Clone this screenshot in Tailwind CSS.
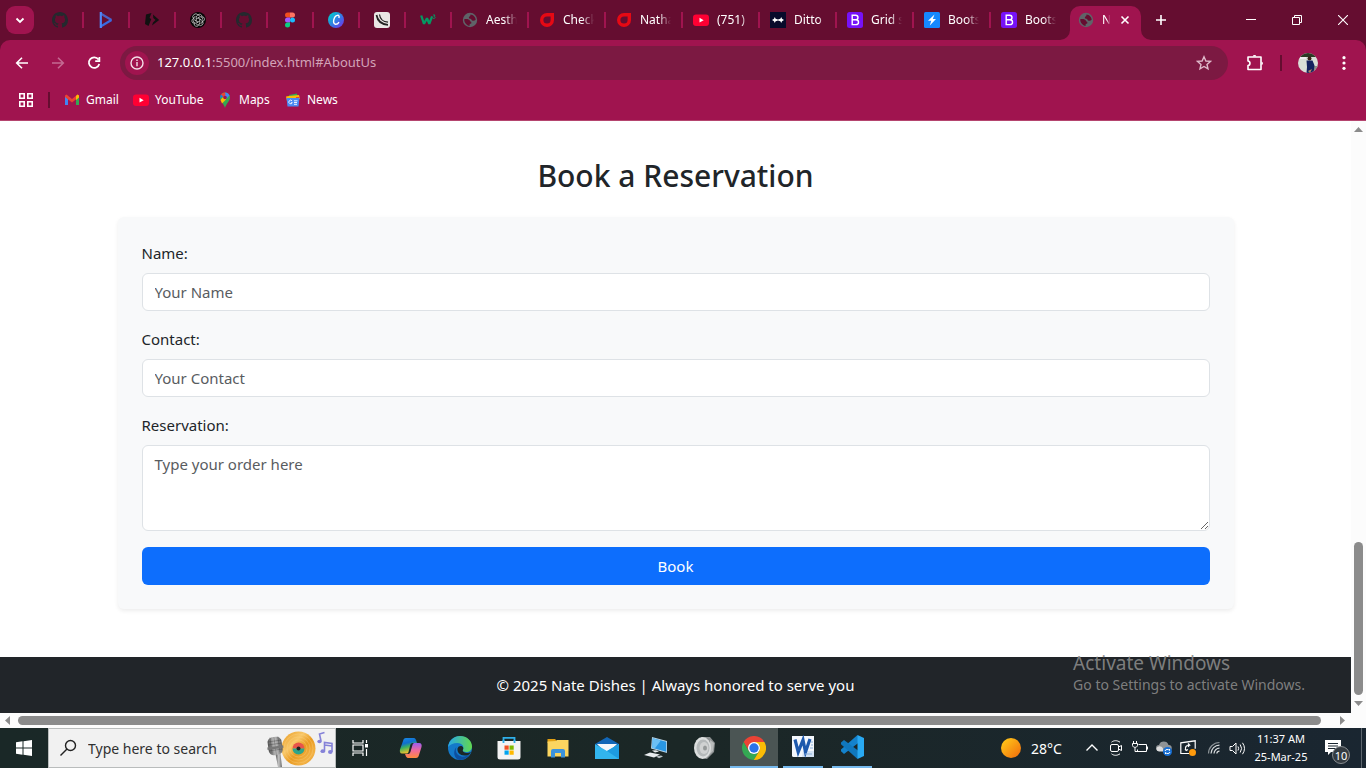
<!DOCTYPE html>
<html lang="en">
<head>
<meta charset="utf-8">
<title>Nate Dishes</title>
<script src="https://cdn.jsdelivr.net/npm/@tailwindcss/browser@4"></script>
</head>
<body class="flex h-screen flex-col overflow-hidden bg-white font-['Noto_Sans','Open_Sans',sans-serif] text-[15px] text-[#212529]">

<svg class="hidden" aria-hidden="true">
  <defs>
    <symbol id="github" viewBox="0 0 16 16"><path fill="#24292e" d="M8 0C3.58 0 0 3.58 0 8c0 3.54 2.29 6.53 5.47 7.59.4.07.55-.17.55-.38 0-.19-.01-.82-.01-1.49-2.01.37-2.53-.49-2.69-.94-.09-.23-.48-.94-.82-1.13-.28-.15-.68-.52-.01-.53.63-.01 1.08.58 1.23.82.72 1.21 1.87.87 2.33.66.07-.52.28-.87.51-1.07-1.78-.2-3.64-.89-3.64-3.95 0-.87.31-1.59.82-2.15-.08-.2-.36-1.02.08-2.12 0 0 .67-.21 2.2.82.64-.18 1.32-.27 2-.27s1.36.09 2 .27c1.53-1.04 2.2-.82 2.2-.82.44 1.1.16 1.92.08 2.12.51.56.82 1.27.82 2.15 0 3.07-1.87 3.75-3.65 3.95.29.25.54.73.54 1.48 0 1.07-.01 1.93-.01 2.2 0 .21.15.46.55.38A8 8 0 0 0 16 8c0-4.42-3.58-8-8-8z"/></symbol>
    <symbol id="globe" viewBox="0 0 16 16"><circle cx="8" cy="8" r="7.200" fill="#5f6368"/><path fill="#650d30" d="M2.200 7.200c2.200-.6 4.300-.3 5.300.9.800 1 .4 1.600 1.800 1.800v1.600l-1.600.6v1.700c-3-.2-5.500-3-5.500-6.600zM8.500 2.500c2.800.2 5 2.500 5.200 5.200-.9 1-2.400 1.300-3.600.7-.9-.5-.5-1.300-1.700-1.600-1-.2-1.700-.7-1.500-1.600.2-.8 1-.7 1.300-1.300z"/></symbol>
    <symbol id="drop" viewBox="0 0 16 16"><path fill="#e50914" fill-rule="evenodd" d="M15 1v7a7 7 0 1 1-7-7zM8 4.400a3.600 3.600 0 1 0 3.600 3.600V4.400z"/></symbol>
    <symbol id="youtube" viewBox="0 0 16 16"><rect y="2.500" width="16" height="11.500" rx="3" fill="#ff0033"/><path fill="#fff" d="M6.500 5.800v4.800l4.200-2.400z"/></symbol>
    <symbol id="bootstrap" viewBox="0 0 16 16"><rect width="16" height="16" rx="2.500" fill="#7712f8"/><path fill="none" stroke="#fff" stroke-width="1.400" d="M5.200 3.200h3.400c3.200 0 3.200 4.500 0 4.500H5.200zm0 4.500h3.700c3.500 0 3.500 4.900 0 4.900H5.200z"/></symbol>
  </defs>
</svg>

<!-- Tab strip -->
<header class="shrink-0 bg-[#650d30] text-white">
  <div class="flex h-10 items-end text-[12px]">
    <button aria-label="Search tabs" class="mr-1 mb-[6px] ml-[6px] grid size-7 shrink-0 place-items-center rounded-[9px] bg-[#a0144f]"><svg class="size-3" viewBox="0 0 12 12" fill="none" stroke="#fff" stroke-width="1.800"><path d="M2.500 4.500 6 8l3.500-3.500"/></svg></button>
    <nav aria-label="Tabs" class="flex h-10 min-w-0 items-center">
      <a href="#" aria-label="GitHub" class="flex w-[44px] justify-center"><svg class="size-4"><use href="#github"/></svg></a><span class="h-4 w-[2px] bg-[#a0144f]"></span>
      <a href="#" aria-label="Player" class="flex w-[44px] justify-center"><svg class="size-4" viewBox="0 0 16 16" fill="none" stroke-width="2.200"><path stroke="#4b5fc4" d="M3 1.800 13.500 8"/><path stroke="#3a6ae0" d="M3 14.200 13.500 8"/><path stroke="#4f86f7" d="M2.800 0v16"/></svg></a><span class="h-4 w-[2px] bg-[#a0144f]"></span>
      <a href="#" aria-label="Code" class="flex w-[44px] justify-center"><svg class="size-4" viewBox="0 0 16 16" fill="#111"><path d="M2 2.500 7.500 1 5.500 6l1.800 1L4.500 14 1 12zM9 2.500 15.200 8 8 13.500l1-3L11.500 8 9.300 6z"/></svg></a><span class="h-4 w-[2px] bg-[#a0144f]"></span>
      <a href="#" aria-label="ChatGPT" class="flex w-[44px] justify-center"><svg class="size-4" viewBox="0 0 16 16"><circle cx="8" cy="8" r="8" fill="#050505"/><g fill="none" stroke="#e4e4e4" stroke-width=".7"><path id="petal" d="M6.200 9V5.200a2 2 0 0 1 3.600-1.200"/><use href="#petal" transform="rotate(60 8 8)"/><use href="#petal" transform="rotate(120 8 8)"/><use href="#petal" transform="rotate(180 8 8)"/><use href="#petal" transform="rotate(240 8 8)"/><use href="#petal" transform="rotate(300 8 8)"/><path d="M8 2.900a2.300 2.300 0 0 1 3.900 1.900 2.300 2.300 0 0 1 .5 4.600 2.300 2.300 0 0 1-3.600 3.300 2.300 2.300 0 0 1-4.500-1.500 2.300 2.300 0 0 1-.8-4.500A2.300 2.300 0 0 1 8 2.900z"/></g></svg></a><span class="h-4 w-[2px] bg-[#a0144f]"></span>
      <a href="#" aria-label="GitHub" class="flex w-[44px] justify-center"><svg class="size-4"><use href="#github"/></svg></a><span class="h-4 w-[2px] bg-[#a0144f]"></span>
      <a href="#" aria-label="Figma" class="flex w-[44px] justify-center"><svg class="size-4" viewBox="0 0 16 16"><path fill="#f24e1e" d="M8 .5v5H5.500a2.500 2.500 0 0 1 0-5z"/><path fill="#ff7262" d="M8 .5h2.500a2.500 2.500 0 0 1 0 5H8z"/><path fill="#a259ff" d="M8 5.500v5H5.500a2.500 2.500 0 0 1 0-5z"/><circle cx="10.500" cy="8" r="2.500" fill="#1abcfe"/><path fill="#0acf83" d="M8 10.500V13a2.500 2.500 0 1 1-2.500-2.500z"/></svg></a><span class="h-4 w-[2px] bg-[#a0144f]"></span>
      <a href="#" aria-label="Canva" class="flex w-[44px] justify-center"><svg class="size-4" viewBox="0 0 16 16"><defs><linearGradient id="cv" x2="1" y2="1"><stop offset=".15" stop-color="#05c4cf"/><stop offset=".6" stop-color="#3d6ee8"/><stop offset="1" stop-color="#7d2ae8"/></linearGradient></defs><circle cx="8" cy="8" r="8" fill="url(#cv)"/><path d="M10.800 6c.9-1.500 0-3-1.500-2.600-3.400.7-5.400 8.400-1.800 8.900 1.500.1 2.700-.8 3.500-2.200" fill="none" stroke="#fff" stroke-width="1.400"/></svg></a><span class="h-4 w-[2px] bg-[#a0144f]"></span>
      <a href="#" aria-label="Design" class="flex w-[44px] justify-center"><svg class="size-4" viewBox="0 0 16 16"><rect width="16" height="16" rx="3" fill="#e9e6e4"/><g fill="none" stroke="#222"><path stroke-width="1.700" d="M2.500 3c1 6 4.500 9.300 11.500 9.800"/><path stroke-width="1.200" d="M5.500 2.500c.5 4 3.500 7.300 8.500 7.700"/></g></svg></a><span class="h-4 w-[2px] bg-[#a0144f]"></span>
      <a href="#" aria-label="W3Schools" class="flex w-[44px] justify-center"><svg class="size-4" viewBox="0 0 16 16" fill="none" stroke="#059862"><path stroke-width="2.300" stroke-linejoin="bevel" d="M1.200 3.500 4 11.800l3-5.500 2.300 5.500 2.800-7.500"/><path stroke-width=".9" d="M13 3h2l-1 1.500c2 0 1.500 2.500-1 1.800"/></svg></a><span class="h-4 w-[2px] bg-[#a0144f]"></span>

      <a href="#" class="flex w-[75px] items-center gap-2 pl-[10px]"><svg class="size-4 shrink-0"><use href="#globe"/></svg><span class="w-[31px] overflow-hidden whitespace-nowrap mask-r-from-60%">Aesth</span></a><span class="h-4 w-[2px] bg-[#a0144f]"></span>
      <a href="#" class="flex w-[75px] items-center gap-2 pl-[10px]"><svg class="size-4 shrink-0"><use href="#drop"/></svg><span class="w-[31px] overflow-hidden whitespace-nowrap mask-r-from-60%">Check</span></a><span class="h-4 w-[2px] bg-[#a0144f]"></span>
      <a href="#" class="flex w-[75px] items-center gap-2 pl-[10px]"><svg class="size-4 shrink-0"><use href="#drop"/></svg><span class="w-[31px] overflow-hidden whitespace-nowrap mask-r-from-60%">Natha</span></a><span class="h-4 w-[2px] bg-[#a0144f]"></span>
      <a href="#" class="flex w-[75px] items-center gap-2 pl-[10px]"><svg class="size-4 shrink-0"><use href="#youtube"/></svg><span class="w-[31px] overflow-hidden whitespace-nowrap mask-r-from-80%">(751)</span></a><span class="h-4 w-[2px] bg-[#a0144f]"></span>
      <a href="#" class="flex w-[75px] items-center gap-2 pl-[10px]"><svg class="size-4 shrink-0" viewBox="0 0 16 16"><path fill="#080b2b" d="M0 0h16v16H0z"/><path fill="#fff" d="M2 8l2-1.300L4.800 5l.8 1.700L8 7.600l2.400-.9.800-1.700.8 1.700L14 8l-2 1.300-.8 1.700-.8-1.700L8 8.500l-2.400.8-.8 1.700L4 9.300z"/></svg><span class="w-[31px] overflow-hidden whitespace-nowrap mask-r-from-80%">Ditto</span></a><span class="h-4 w-[2px] bg-[#a0144f]"></span>
      <a href="#" class="flex w-[75px] items-center gap-2 pl-[10px]"><svg class="size-4 shrink-0"><use href="#bootstrap"/></svg><span class="w-[31px] overflow-hidden whitespace-nowrap mask-r-from-60%">Grid s</span></a><span class="h-4 w-[2px] bg-[#a0144f]"></span>
      <a href="#" class="flex w-[75px] items-center gap-2 pl-[10px]"><svg class="size-4 shrink-0" viewBox="0 0 16 16"><rect width="16" height="16" rx="1.500" fill="#1688ff"/><path fill="#fff" d="M10.500 2.500 4 8.800h3.300L5.800 13.500 12 7H8.800z"/></svg><span class="w-[31px] overflow-hidden whitespace-nowrap mask-r-from-60%">Boots</span></a><span class="h-4 w-[2px] bg-[#a0144f]"></span>
      <a href="#" class="flex w-[75px] items-center gap-2 pl-[10px]"><svg class="size-4 shrink-0"><use href="#bootstrap"/></svg><span class="w-[31px] overflow-hidden whitespace-nowrap mask-r-from-60%">Boots</span></a>
    </nav>
    <div class="ml-[-6px] flex h-[34px] shrink-0 items-end">
      <svg class="size-[10px]" viewBox="0 0 10 10"><path fill="#a0144f" d="M10 0v10H0A10 10 0 0 0 10 0z"/></svg>
      <div class="flex h-[34px] w-[71px] items-center rounded-t-[10px] bg-[#a0144f] pb-[6px] pl-2">
        <svg class="size-4 shrink-0"><use href="#globe"/></svg>
        <span class="ml-2 w-[8px] overflow-hidden whitespace-nowrap mask-r-from-60%">N</span>
        <button aria-label="Close tab" class="ml-[7px] grid size-4 place-items-center"><svg class="size-[10px]" viewBox="0 0 10 10" stroke="#fff" stroke-width="1.600"><path d="m1.500 1.500 7 7m0-7-7 7"/></svg></button>
      </div>
      <svg class="size-[10px]" viewBox="0 0 10 10"><path fill="#a0144f" d="M0 0v10h10A10 10 0 0 1 0 0z"/></svg>
    </div>
    <button aria-label="New tab" class="grid h-10 w-5 shrink-0 place-items-center"><svg class="size-[10px]" viewBox="0 0 10 10" stroke="#fff" stroke-width="1.600"><path d="M5 0v10M0 5h10"/></svg></button>
    <div class="ml-auto flex h-10 shrink-0">
      <button aria-label="Minimize" class="grid w-[46px] place-items-center"><svg class="size-[10px]" viewBox="0 0 10 10" stroke="#fff"><path d="M0 4.500h10"/></svg></button>
      <button aria-label="Restore" class="grid w-[46px] place-items-center"><svg class="size-[10px]" viewBox="0 0 10 10" fill="none" stroke="#fff"><path d="M.5 2.500h7v7h-7zM2.500 2.500v-2h7v7h-2"/></svg></button>
      <button aria-label="Close" class="grid w-[46px] place-items-center"><svg class="size-[10px]" viewBox="0 0 10 10" stroke="#fff" stroke-width="1.100"><path d="m0 0 10 10M10 0 0 10"/></svg></button>
    </div>
  </div>

  <!-- Toolbar and bookmarks -->
  <div class="rounded-t-[10px] border-b border-[#b5456f] bg-[#a0144f]">
    <div class="flex h-[46px] items-center">
      <div class="flex shrink-0 items-center gap-5 pr-[18px] pl-[14px]">
        <button aria-label="Back"><svg class="size-4" viewBox="0 0 16 16" fill="none" stroke="#fff" stroke-width="1.600"><path d="M14 8H3M8 2.700 2.700 8 8 13.300"/></svg></button>
        <button aria-label="Forward"><svg class="size-4" viewBox="0 0 16 16" fill="none" stroke="#c46a92" stroke-width="1.600"><path d="M2 8h11M8 2.700 13.300 8 8 13.300"/></svg></button>
        <button aria-label="Reload"><svg class="size-4" viewBox="0 0 16 16" fill="none" stroke="#fff" stroke-width="1.700"><path d="M12.500 4.500A5.300 5.300 0 1 0 13.300 9M13.400 2v4.200H9.200"/></svg></button>
      </div>
      <div class="flex h-[34px] min-w-0 flex-1 items-center rounded-full bg-[#7c1942] pr-4 pl-[5px]">
        <button aria-label="Site information" class="grid size-6 shrink-0 place-items-center rounded-full bg-[#a0144f]"><svg class="size-[14px]" viewBox="0 0 14 14" fill="none" stroke="#f3dfe8" stroke-width="1.400"><circle cx="7" cy="7" r="6"/><path d="M7 6v4.200M7 3.400V5"/></svg></button>
        <a href="#AboutUs" class="ml-2 truncate text-[13px] text-[#d3a3b8]"><span class="text-white">127.0.0.1</span>:5500/index.html#AboutUs</a>
        <button aria-label="Bookmark this page" class="ml-auto"><svg class="size-4" viewBox="0 0 16 16" fill="none" stroke="#dfb9ca" stroke-width="1.400"><path d="m8 1.800 1.900 4.200 4.500.4-3.400 3 1 4.500L8 11.500l-4 2.400 1-4.500-3.400-3 4.500-.4z"/></svg></button>
      </div>
      <div class="flex shrink-0 items-center pr-[14px] pl-[18px]">
        <button aria-label="Extensions"><svg class="size-[18px]" viewBox="0 0 18 18" fill="none" stroke="#fff" stroke-width="1.600" stroke-linejoin="round"><path d="M2 3h13v12.500H2v-4c2.600-.3 2.600-4.200 0-4.500z"/><path fill="#fff" stroke="none" d="M6.700 2.500a1.900 1.900 0 0 1 3.700 0zM15.500 7.400a1.900 1.900 0 0 1 0 3.700z"/></svg></button>
        <span class="mx-4 h-4 w-[2px] bg-[#650d30]"></span>
        <button aria-label="Profile"><svg class="size-5 rounded-full" viewBox="0 0 20 20"><path fill="#d9dfd8" d="M0 0h20v20H0z"/><path fill="#2c3a24" d="M0 0h20v4H0z"/><path fill="#eee" d="M2 4h6v2H2z"/><path fill="#8b8f88" d="M15 13h5v7h-5z"/><circle cx="11.500" cy="5.500" r="2" fill="#3a2118"/><path fill="#14225f" d="M8.500 7.500h6l2 5-1 7.500H8.500l.500-6z"/><path fill="#b58a60" d="m10 18 4-2-2 4z"/></svg></button>
        <button aria-label="Menu" class="ml-[18px]"><svg class="size-4" viewBox="0 0 16 16" fill="#fff"><circle cx="8" cy="2.700" r="1.600"/><circle cx="8" cy="8" r="1.600"/><circle cx="8" cy="13.300" r="1.600"/></svg></button>
      </div>
    </div>
    <nav aria-label="Bookmarks" class="flex h-[34px] items-center pb-[6px] pl-[18px] text-[12px]">
      <button aria-label="Apps"><svg class="size-4" viewBox="0 0 16 16" fill="none" stroke="#fff" stroke-width="1.600"><path d="M1.800 1.800h4.400v4.400H1.800zM9.800 1.800h4.400v4.400H9.800zM1.800 9.800h4.400v4.400H1.800zM9.800 9.800h4.400v4.400H9.800z"/></svg></button>
      <span class="mr-[14px] ml-[14px] h-4 w-[2px] bg-[#650d30]"></span>
      <a href="#" class="flex w-[69px] items-center gap-[6px]"><svg class="size-4" viewBox="0 0 16 16"><path fill="#4285f4" d="M1 4v9h3V7z"/><path fill="#34a853" d="M15 4v9h-3V7z"/><path fill="#ea4335" d="M1 3.500 2.500 2.500 8 7l5.500-4.500L15 3.500V5l-7 5.500L1 5z"/><path fill="#fbbc04" d="M12 4v4l3-2.500V3.500l-1.500-1z"/></svg>Gmail</a>
      <a href="#" class="flex w-[84px] items-center gap-[6px]"><svg class="size-4"><use href="#youtube"/></svg>YouTube</a>
      <a href="#" class="flex w-[68px] items-center gap-[6px]"><svg class="size-4" viewBox="0 0 16 16"><path fill="#34a853" d="M8 16C7 12 3 9 3 5.500a5 5 0 0 1 10 0C13 9 9 12 8 16z"/><path fill="#4285f4" d="M8 .5a5 5 0 0 1 4.500 3L8 8z"/><path fill="#ea4335" d="M4 2.500A5 5 0 0 1 8 .5L8.500 3 6 6z"/><path fill="#1a73e8" d="M3 5.500 4 2.500 6.500 5z"/><path fill="#fbbc04" d="m3.500 8 3-3.500L9 7.500l-4 4z"/><circle cx="8" cy="5.500" r="1.800" fill="#a0144f"/></svg>Maps</a>
      <a href="#" class="flex items-center gap-[6px]"><svg class="size-4" viewBox="0 0 16 16"><path fill="#34a853" d="m4 3 8-1.500 1 5.500H4z"/><path fill="#fbbc04" d="M1 4.500 4 4l10-1 1 4-13 2z"/><path fill="#ea4335" d="M11 5h3.500L14 8h-3z"/><path fill="#4a8af4" d="M1.500 6h13l-1 8.500h-11z"/><path fill="none" stroke="#e8f0fe" d="M7 8.800a1.800 1.800 0 1 0 .3 1.900H6M9 8.800h3.500M9 10.500h3M9 12.300h3"/></svg>News</a>
    </nav>
  </div>
</header>

<!-- Page viewport -->
<div class="relative flex min-h-0 flex-1">
  <div class="flex min-w-0 flex-1 flex-col">
    <main class="flex-1 px-4 pt-9">
      <h1 class="text-center text-[30px] leading-[38px] font-medium">Book a Reservation</h1>
      <form class="mx-auto mt-[22px] flex max-w-[1116px] flex-col rounded-[6px] bg-[#f8f9fa] p-6 shadow-[0_2px_4px_rgba(0,0,0,0.075)]">
        <label for="name" class="mb-2 leading-6">Name:</label>
        <input id="name" type="text" placeholder="Your Name" class="mb-4 h-[38px] rounded-[6px] border border-[#dee2e6] bg-white px-3 placeholder:text-[#595c5f]">
        <label for="contact" class="mb-2 leading-6">Contact:</label>
        <input id="contact" type="text" placeholder="Your Contact" class="mb-4 h-[38px] rounded-[6px] border border-[#dee2e6] bg-white px-3 placeholder:text-[#595c5f]">
        <label for="order" class="mb-2 leading-6">Reservation:</label>
        <textarea id="order" placeholder="Type your order here" class="mb-4 h-[86px] resize-y rounded-[6px] border border-[#dee2e6] bg-white px-3 py-[6px] leading-6 placeholder:text-[#595c5f]"></textarea>
        <button type="button" class="h-[38px] rounded-[6px] bg-[#0d6efd] text-white">Book</button>
      </form>
    </main>
    <footer class="bg-[#212529] py-4 text-center leading-6 text-white">© 2025 Nate Dishes | Always honored to serve you</footer>
  </div>
  <div class="flex w-[15px] shrink-0 flex-col items-center bg-[#fcfcfc] pt-[6px] pb-[7px]" aria-hidden="true">
    <svg class="h-[5px] w-[9px]" viewBox="0 0 9 5" fill="#8b8b8b"><path d="M0 5 4.500 0 9 5z"/></svg>
    <span class="mt-auto h-[153px] w-[9px] rounded-full bg-[#8b8b8b]"></span>
    <svg class="mt-[6px] h-[5px] w-[9px]" viewBox="0 0 9 5" fill="#8b8b8b"><path d="M0 0 4.500 5 9 0z"/></svg>
  </div>
  <div class="pointer-events-none absolute right-[61px] bottom-[18px] text-[14px] leading-5 text-[#8a8a8a]/90">
    <p class="text-[19px] leading-6">Activate Windows</p>
    <p>Go to Settings to activate Windows.</p>
  </div>
</div>
<div class="flex h-[15px] shrink-0 items-center bg-[#fcfcfc] pr-[21px] pl-[5px]" aria-hidden="true">
  <svg class="h-[9px] w-[5px]" viewBox="0 0 5 9" fill="#8b8b8b"><path d="M5 0v9L0 4.500z"/></svg>
  <span class="mx-2 h-[9px] flex-1 rounded-full bg-[#8b8b8b]"></span>
  <svg class="ml-[11px] h-[9px] w-[5px]" viewBox="0 0 5 9" fill="#8b8b8b"><path d="M0 0v9l5-4.500z"/></svg>
</div>

<!-- Taskbar -->
<div class="flex h-10 shrink-0 bg-linear-to-r from-[#1a2827] via-[#1b2726] to-[#1a2631] text-[14px] text-white">
  <button aria-label="Start" class="grid w-12 shrink-0 place-items-center"><svg class="size-4" viewBox="0 0 16 16" fill="#fff"><path d="M0 2.200 6.500 1.300v6.200H0zM7.500 1.200 16 0v7.500H7.500zM0 8.500h6.500v6.200L0 13.800zM7.500 8.500H16V16l-8.500-1.200z"/></svg></button>
  <div class="flex w-72 shrink-0 items-center border border-[#b9bcbc] bg-[#f1f1f1] pl-[10px]">
    <svg class="size-[18px] shrink-0" viewBox="0 0 18 18" fill="none" stroke="#222" stroke-width="1.400"><circle cx="11.500" cy="6.500" r="5"/><path d="M8 10 1.500 16.500"/></svg>
    <input type="text" aria-label="Search" placeholder="Type here to search" class="ml-[11px] w-[170px] placeholder:text-[#303030]">
    <svg class="ml-auto h-[38px] w-[72px] shrink-0" viewBox="0 0 72 38" aria-hidden="true"><defs><linearGradient id="mic"><stop stop-color="#555"/><stop offset=".5" stop-color="#c4c4c4"/><stop offset="1" stop-color="#666"/></linearGradient><linearGradient id="disc" x2="1" y2="1"><stop stop-color="#e99a20"/><stop offset=".35" stop-color="#f8c768"/><stop offset=".55" stop-color="#e99b22"/><stop offset=".8" stop-color="#f3b245"/><stop offset="1" stop-color="#d98712"/></linearGradient></defs><circle cx="35.500" cy="19.500" r="17" fill="url(#disc)"/><g fill="none" stroke="#fad58a" stroke-opacity=".5" stroke-width=".7"><circle cx="35.500" cy="19.500" r="14.500"/><circle cx="35.500" cy="19.500" r="11.500"/><circle cx="35.500" cy="19.500" r="8.500"/></g><path fill="#e8554a" d="M29.500 19.500a6 6 0 0 1 12 0z"/><path fill="#2fa58a" d="M29.500 19.500a6 6 0 0 0 12 0z"/><circle cx="35.500" cy="19.500" r="2" fill="#222"/><path fill="url(#mic)" d="M12.500 25h5l1.500 13h-4z"/><g transform="rotate(-8 12 16)"><rect x="5" y="8" width="14" height="18" rx="5" fill="url(#mic)"/><path stroke="#444" stroke-opacity=".5" stroke-width=".8" d="M5 12h14M5 15h14M5 21h14M8 8v16M12 8v18M16 8v16"/><path fill="#777" d="M4 17.500h16v2.500H4z"/></g><g fill="none" stroke="#8582d8" stroke-width="1.600"><path d="m58 12-1.500-7 5-1.500M61.500 22V13.500l7.500 1V23M61.500 16l7.500 1"/></g><g fill="#8582d8"><ellipse cx="56.500" cy="12.500" rx="2.200" ry="1.800"/><ellipse cx="59.800" cy="22.200" rx="2.300" ry="1.900"/><ellipse cx="67.300" cy="23" rx="2.300" ry="1.900"/></g></svg>
  </div>
  <button aria-label="Task view" class="mr-[3px] grid w-12 shrink-0 place-items-center"><svg class="size-4" viewBox="0 0 16 16" fill="none" stroke="#fff" stroke-width="1.200"><path d="M1 0v3h10V0M1 16v-3h10v3M1 5h10v6H1zM14.500 0v3M14.500 9v7"/><path fill="#fff" stroke="none" d="M13 4h3v3.500h-3z"/></svg></button>
  <div class="flex gap-px">
    <button aria-label="Copilot" class="grid w-12 place-items-center"><svg class="size-6" viewBox="0 0 24 24"><defs><linearGradient id="ca" x2=".3" y2="1"><stop stop-color="#1b8ee8"/><stop offset=".4" stop-color="#0f6ed0"/><stop offset=".65" stop-color="#3fb35c"/><stop offset="1" stop-color="#f4c22b"/></linearGradient><linearGradient id="cb" x2="0" y2="1"><stop stop-color="#9a5cf0"/><stop offset=".5" stop-color="#f06a9a"/><stop offset="1" stop-color="#ff8a3c"/></linearGradient></defs><path fill="url(#ca)" d="M7 2h7c3 0 3 2 4 5h-4c-2 0-2.500 1-3 3l-1.500 6c-.4 1-1 1.500-2 1.500H3c-2 0-2.500-2-2-4L4 5c.5-2 1.300-3 3-3z"/><path fill="url(#cb)" d="M17 22h-7c-3 0-3-2-4-4h3c2 0 2.500-2 3-4l1.500-5c.4-1.500 1-2 2.500-2h4c2.500 0 3 2 2.500 4L20 19c-.5 2-1.300 3-3 3z"/></svg></button>
    <button aria-label="Edge" class="grid w-12 place-items-center"><svg class="size-6" viewBox="0 0 24 24"><defs><linearGradient id="ea" x2="1"><stop stop-color="#28a8e8"/><stop offset="1" stop-color="#62d84e"/></linearGradient></defs><circle cx="12" cy="12" r="12" fill="#1479c9"/><path fill="url(#ea)" d="M0 11C1 4 6 0 12 0c7 0 12 5 12 10.500 0 3.500-2.500 5.500-5.500 5.500-2.500 0-4.500-1-3.700-2.300C16.500 11 14.500 7 9.500 7 5 7 1.500 9 0 11z"/><path fill="#0d4f9e" d="M8.500 11c-2.500 6 2.500 10.500 8 9.500 2.500-.3 4-1.500 5.500-3-2.500 5-7 6.800-11 6.400C6 22.500 4.500 15 8.500 11z"/><path fill="#1b2726" d="M9.500 12.500c1-3 5-3.300 5.800-.5.3 1.500-1.300 2-.2 3.500 1.200 1.700 5 1.800 7.900.5-1.300 3-4 3.500-6.500 3.500-4.500 0-7.500-3-7-7z"/></svg></button>
    <button aria-label="Store" class="grid w-12 place-items-center"><svg class="size-6" viewBox="0 0 24 24"><path fill="none" stroke="#2fb0ea" stroke-width="1.800" d="M6.500 7V1.900h11V7"/><path fill="#f3f3f3" d="M.5 5h23v16a2.500 2.500 0 0 1-2.500 2.500H3A2.500 2.500 0 0 1 .5 21z"/><path fill="none" stroke="#2fb0ea" stroke-width="1.800" d="M6.500 4v3M17.500 4v3"/><path fill="#f25022" d="M7.500 9.500h4.200v4.200H7.500z"/><path fill="#7fba00" d="M12.500 9.500h4.200v4.200h-4.200z"/><path fill="#00a4ef" d="M7.500 14.500h4.200v4.200H7.500z"/><path fill="#ffb900" d="M12.500 14.500h4.200v4.200h-4.200z"/></svg></button>
    <button aria-label="File Explorer" class="grid w-12 place-items-center"><svg class="size-6" viewBox="0 0 24 24"><path fill="#e2a013" d="M1.500 3H9l2 2-2 2H1.500z"/><path fill="#fbd560" d="M1.500 5.500 10 5l1-1h11.500v16.500h-21z"/><path fill="#3c93dc" d="M5 21.500V15a2 2 0 0 1 2-2h10a2 2 0 0 1 2 2v6.500h-4V17H9v4.500z"/></svg></button>
    <button aria-label="Mail" class="grid w-12 place-items-center"><svg class="size-6" viewBox="0 0 24 24"><path fill="#1267b8" d="m0 8 12-7 12 7-12 7z"/><path fill="#f5f8fb" d="M2 8h20l-8 8h-4z"/><path fill="#32b5ee" d="m0 8 12 7 12-7v15H0z"/><path fill="#1d9be0" d="m12 15 12-7v15z"/></svg></button>
    <button aria-label="This PC" class="grid w-12 place-items-center"><svg class="size-6" viewBox="0 0 24 24"><path fill="#b9d3e4" d="m8 1 15 4v12L7 12.500z"/><path fill="#2a97e4" d="m8.800 2.300 13.400 3.500v10L8 11.700z"/><path fill="#6cc0f5" d="m8.800 2.300 8 2.100-6 8-2.800-.7z"/><path fill="#e8ecee" d="m0 19 6-2.500 10 2-6 3zM8 14.500l4-.3 3 1.300-4 1z"/><path fill="#b8c0c4" d="m12 20.500 5-1 2 1-4 1.700z"/></svg></button>
    <button aria-label="Sound" class="grid w-12 place-items-center"><svg class="size-6" viewBox="0 0 24 24"><path fill="#8d9192" d="M8 1h9l5 6-1 9-7 7-6-1z"/><path fill="#b9bcbc" d="m17 4 4 3-1 8-4 4z"/><ellipse cx="9.500" cy="12" rx="8.500" ry="11" fill="#dcdede"/><ellipse cx="10" cy="12" rx="6.500" ry="8.500" fill="#b5b9ba"/><ellipse cx="11" cy="12" rx="4.500" ry="6" fill="#d0d2d2"/><ellipse cx="12" cy="12" rx="2" ry="2.500" fill="#959999"/></svg></button>
    <button aria-label="Chrome" class="grid w-12 place-items-center border-b-2 border-[#76b9ed] bg-[#4b5554] pt-[2px]"><svg class="size-6" viewBox="0 0 24 24"><path fill="#ea4335" d="M1.600 6A12 12 0 0 1 22.400 6H12L6.800 15z"/><path fill="#34a853" d="M1.600 6 6.800 15A6 6 0 0 0 12 18l5-3-5.200 9A12 12 0 0 1 1.600 6z"/><path fill="#fbbc05" d="M22.400 6A12 12 0 0 1 11.800 24l5.400-9A6 6 0 0 0 17.200 9L12 6z"/><circle cx="12" cy="12" r="6" fill="#fff"/><circle cx="12" cy="12" r="4.700" fill="#2a72e8"/></svg></button>
    <button aria-label="Word" class="mx-1 grid w-10 place-items-center border-b-2 border-[#76b9ed]"><svg class="size-6" viewBox="0 0 24 24"><path fill="#f3f7fc" d="M1 1h22v21H2.500A1.500 1.500 0 0 1 1 20.500z"/><path fill="#d3e2f3" d="M12 16h11v6H11z"/><path fill="none" stroke="#1d59ad" stroke-width="3.200" d="M4 4.500 7.200 17 12 5l2.500 12L19 4"/><path stroke="#8ab0da" d="M20 7h2M20 10h2M19 13h3M14 19h7"/></svg></button>
    <button aria-label="Visual Studio Code" class="mx-1 grid w-10 place-items-center border-b-2 border-[#76b9ed]"><svg class="size-6" viewBox="0 0 24 24"><path fill="#1482cc" d="m17.500 0 2 7L4 19l-3-2.700V14.500z"/><path fill="#1077bd" d="M1 7.500 4 5l16 12-2.500 7L1 9.300z"/><path fill="#29a9f2" d="M17.500 0 24 3v18l-6.500 3z"/></svg></button>
  </div>
  <div class="ml-auto flex shrink-0 items-center">
    <svg class="size-5" viewBox="0 0 20 20" aria-hidden="true"><defs><linearGradient id="sun" x2="1" y2="1"><stop offset=".1" stop-color="#ffc619"/><stop offset="1" stop-color="#f0690b"/></linearGradient></defs><circle cx="10" cy="10" r="10" fill="url(#sun)"/></svg>
    <span class="ml-[10px] w-[49px]">28°C</span>
    <div class="flex items-center gap-2">
      <button aria-label="Show hidden icons" class="ml-1"><svg class="size-4" viewBox="0 0 16 16" fill="none" stroke="#fff" stroke-width="1.400"><path d="m2.500 10.500 5.500-5.500 5.500 5.500"/></svg></button>
      <svg class="size-4" viewBox="0 0 16 16" fill="none" stroke="#fff"><rect x="2.500" y="4.500" width="8" height="7" rx="1.500"/><path d="m10.500 7 3-1.500v5l-3-1.500M3.500 2.200C6 .2 9 .2 12 2.200M3.500 13.800c2.500 2 5.500 2 8.500 0"/></svg>
      <svg class="size-4" viewBox="0 0 16 16" fill="none" stroke="#fff"><path d="M6.500 4.500h8v7h-9v-2M15.500 6.500v3M1.500 1v2M4.500 1v2M.5 3.500h5v2C5 8 1 8 .5 5.500zM3 7.500v4h3"/></svg>
      <svg class="size-4" viewBox="0 0 16 16"><path fill="#8f9396" d="M3 11a3 3 0 0 1 0-6 5 5 0 0 1 9.500 0A3 3 0 0 1 13 11z"/><path fill="#ddd" d="M3 11.500a2.500 2.500 0 0 1 0-5c1.500-.5 3 .5 4 2v3z"/><circle cx="11.500" cy="11.500" r="4.500" fill="#1870d5"/><path fill="none" stroke="#fff" d="M9 11c.5-2 3.500-2 4.500-.5V9M14 12c-.5 2-3.500 2-4.500.5V14"/></svg>
      <svg class="size-4" viewBox="0 0 16 16"><path fill="none" stroke="#fff" stroke-width="1.200" d="M9 13.500H.8V2.800L15.200.8v8M6 10.500C4.500 7.500 6 5 9.500 5L8 3.500M9.500 5 8 6.800M5 9l1.200 1.500L8 9.500"/><circle cx="12.500" cy="12.500" r="3.500" fill="#ff9a0c"/></svg>
      <svg class="ml-[3px] size-4" viewBox="0 0 16 16" fill="none" stroke="#d8dcde" stroke-width="1.200"><path stroke="#8c9397" d="M1.500 13.500A11 11 0 0 1 12.500 2.500"/><path d="M4 13.500A8.500 8.500 0 0 1 12.500 5.200M7 13.500A5.500 5.500 0 0 1 12.500 8.200M9.800 13.500a2.700 2.700 0 0 1 2.700-2.300"/></svg>
      <svg class="ml-[-2px] size-[17px]" viewBox="0 0 17 17" fill="none" stroke="#fff"><path d="M1 6.500h2.500L7 3v11l-3.500-3.500H1zM9 6.500q1.300 2 0 4M11.200 4.500q2.800 4 0 8M13.500 2.800q4 5.700 0 11.400"/></svg>
    </div>
    <div class="ml-[5px] w-[60px] text-center text-[11px] leading-[18px] whitespace-nowrap"><p>11:37 AM</p><p>25-Mar-25</p></div>
    <button aria-label="10 notifications" class="relative ml-[14px] h-10 w-[36px]"><svg class="absolute top-[12px] left-0 size-4" viewBox="0 0 16 16"><path fill="#fff" d="M0 0h16v12H6l-3 3v-3H0z"/><path stroke="#1a2631" d="M3 3.500h10M3 6h10M3 8.500h10"/></svg><span class="absolute top-[18px] left-[7px] grid size-[18px] place-items-center rounded-full border border-[#878c90] bg-[#343b41] text-[11px] leading-none">10</span></button>
    <span class="mr-1 h-10 w-px bg-[#5d666e]"></span>
  </div>
</div>
</body>
</html>
